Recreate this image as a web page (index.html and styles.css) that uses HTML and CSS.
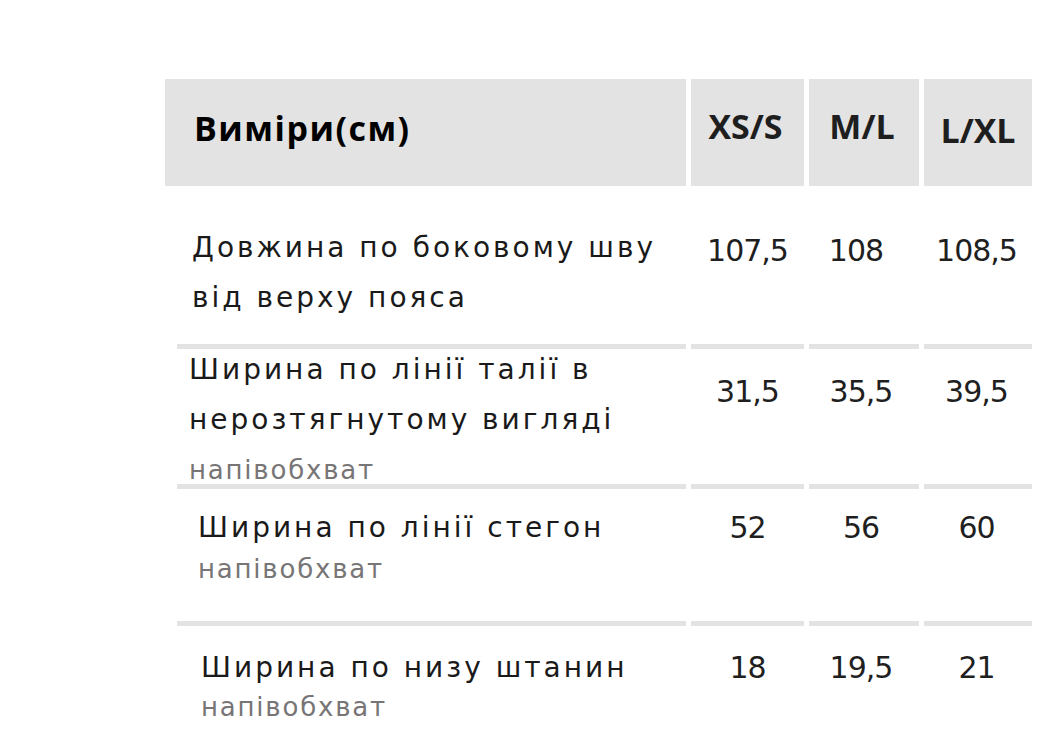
FILE: index.html
```html
<!DOCTYPE html>
<html lang="uk">
<head>
<meta charset="utf-8">
<title>Виміри</title>
<link rel="stylesheet" href="styles.css">
</head>
<body>
<div class="page">
  <div class="size-table">
    <div class="cell head head-label">Виміри(см)</div>
    <div class="cell head head-size">XS/S</div>
    <div class="cell head head-size">M/L</div>
    <div class="cell head head-size head-size--low">L/XL</div>

    <div class="cell label row-1">
      <div class="label-main">Довжина по боковому шву<br>від верху пояса</div>
    </div>
    <div class="cell value row-1">107,5</div>
    <div class="cell value value--shift row-1">108</div>
    <div class="cell value value--last row-1">108,5</div>

    <div class="cell label row-2 sep">
      <div class="label-main">Ширина по лінії талії в<br>нерозтягнутому вигляді</div>
      <div class="label-sub">напівобхват</div>
    </div>
    <div class="cell value row-2 sep">31,5</div>
    <div class="cell value value--mid row-2 sep">35,5</div>
    <div class="cell value value--last row-2 sep">39,5</div>

    <div class="cell label row-3 sep">
      <div class="label-main">Ширина по лінії стегон</div>
      <div class="label-sub">напівобхват</div>
    </div>
    <div class="cell value row-3 sep">52</div>
    <div class="cell value value--mid row-3 sep">56</div>
    <div class="cell value value--last row-3 sep">60</div>

    <div class="cell label row-4 sep">
      <div class="label-main">Ширина по низу штанин</div>
      <div class="label-sub">напівобхват</div>
    </div>
    <div class="cell value row-4 sep">18</div>
    <div class="cell value value--mid row-4 sep">19,5</div>
    <div class="cell value value--last row-4 sep">21</div>
  </div>
</div>
</body>
</html>
```

FILE: styles.css
```css
html, body {
  margin: 0;
  padding: 0;
  background: #ffffff;
}

.page {
  padding: 79px 0 0 165px;
  height: 732px;
  box-sizing: border-box;
  overflow: hidden;
}

.size-table {
  display: grid;
  grid-template-columns: 521px 113px 110px 108px;
  grid-template-rows: 107px 158px 140px 137px 111px;
  column-gap: 5px;
  row-gap: 0;
}

.cell {
  box-sizing: border-box;
  min-width: 0;
}

/* header */
.head {
  background: #e3e3e3;
  font-family: "Open Sans", "DejaVu Sans", sans-serif;
  font-weight: 700;
  font-size: 34px;
  line-height: 46px;
  padding-top: 26px;
  color: #1e1e1e;
  white-space: nowrap;
}

.head-label {
  color: #000000;
  padding-left: 29px;
  letter-spacing: 1.5px;
}

.head-size {
  text-align: center;
  padding-top: 24px;
  padding-right: 4px;
}

.head-size--low {
  padding-top: 28px;
  padding-right: 0;
}

/* body rows */
.sep {
  border-top: 5px solid #e3e3e3;
}

.label.sep {
  margin-left: 12px;
}

.label-main {
  font-family: "DejaVu Sans", sans-serif;
  font-size: 28px;
  line-height: 50px;
  letter-spacing: 3px;
  color: #1a1a1a;
  white-space: nowrap;
}

.label-sub {
  font-family: "DejaVu Sans", sans-serif;
  font-size: 26px;
  line-height: 30px;
  letter-spacing: 1.8px;
  color: #777575;
  white-space: nowrap;
}

.value {
  font-family: "DejaVu Sans", sans-serif;
  font-size: 30px;
  line-height: 50px;
  letter-spacing: -1px;
  color: #1f1f1f;
  text-align: center;
  white-space: nowrap;
}

.value--mid {
  padding-right: 6px;
}

.value--shift {
  padding-right: 16px;
}

.value--last {
  padding-right: 3px;
}

/* row 1 */
.label.row-1 { padding: 37px 0 0 27px; }
.value.row-1 { padding-top: 40px; }

/* row 2 */
.label.row-2 { padding: 0 0 0 12px; }
.label.row-2 .label-main { margin-top: -4px; }
.label.row-2 .label-sub { margin-top: 10px; }
.value.row-2 { padding-top: 18px; }

/* row 3 */
.label.row-3 { padding: 14px 0 0 21px; }
.label.row-3 .label-sub { margin-top: 1px; }
.value.row-3 { padding-top: 14px; }

/* row 4 */
.label.row-4 { padding: 17px 0 0 24px; }
.label.row-4 .label-sub { margin-top: -1px; }
.value.row-4 { padding-top: 17px; }
```
